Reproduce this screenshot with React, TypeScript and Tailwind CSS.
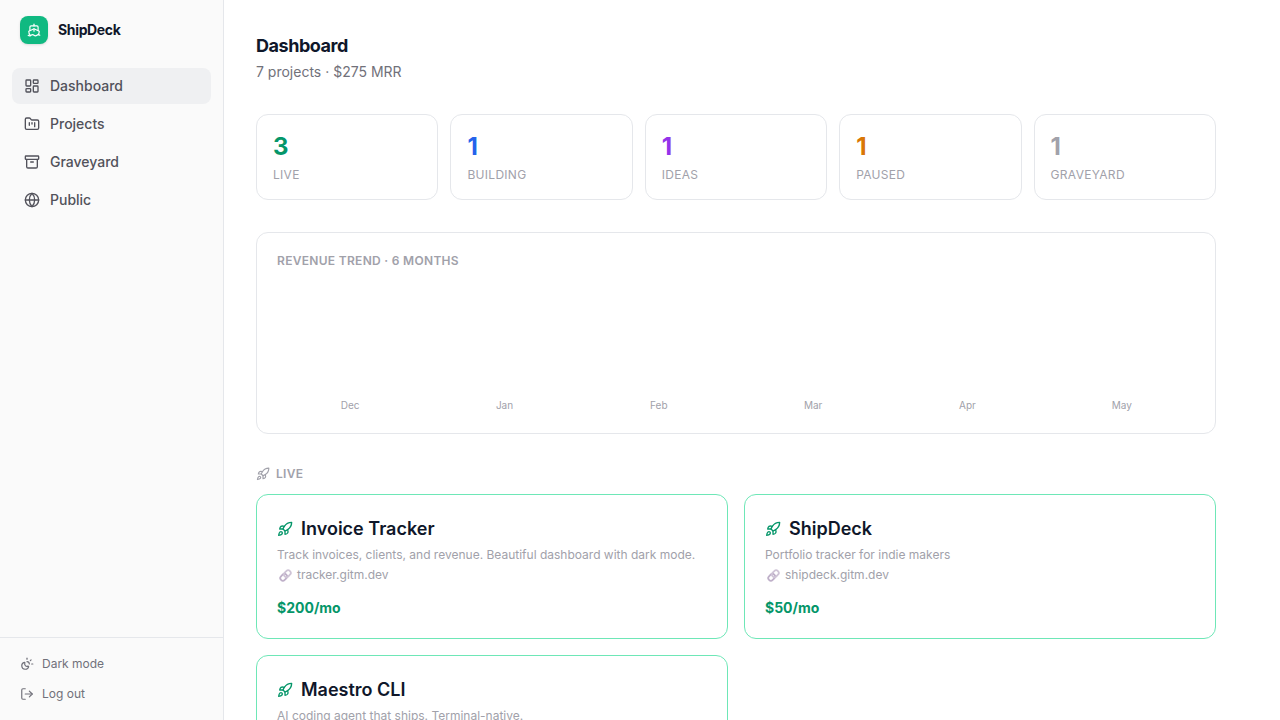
import {
    Archive,
    FolderKanban,
    Globe,
    LayoutDashboard,
    LogOut,
    Rocket,
    Ship,
    SunMoon,
} from "lucide-react";

const navItems = [
    { label: "Dashboard", icon: LayoutDashboard, active: true },
    { label: "Projects", icon: FolderKanban, active: false },
    { label: "Graveyard", icon: Archive, active: false },
    { label: "Public", icon: Globe, active: false },
];

const stats = [
    { label: "Live", value: 3, color: "text-[#059669]" },
    { label: "Building", value: 1, color: "text-[#2563eb]" },
    { label: "Ideas", value: 1, color: "text-[#9333ea]" },
    { label: "Paused", value: 1, color: "text-[#d97706]" },
    { label: "Graveyard", value: 1, color: "text-[#a1a1aa]" },
];

const months = ["Dec", "Jan", "Feb", "Mar", "Apr", "May"];

const liveProjects = [
    {
        name: "Invoice Tracker",
        description: "Track invoices, clients, and revenue. Beautiful dashboard with dark mode.",
        host: "tracker.gitm.dev",
        mrr: 200,
    },
    {
        name: "ShipDeck",
        description: "Portfolio tracker for indie makers",
        host: "shipdeck.gitm.dev",
        mrr: 50,
    },
    {
        name: "Maestro CLI",
        description: "AI coding agent that ships. Terminal-native.",
        host: "maestro.gitm.dev",
        mrr: 25,
    },
];

function ChainIcon() {
    return (
        <svg width="16" height="16" viewBox="0 0 16 16" fill="none" aria-hidden="true">
            <g transform="rotate(-45 8.5 8.5)" strokeWidth="1.8">
                <rect x="2.2" y="5.9" width="7.4" height="5.2" rx="2.6" stroke="#bfb0c9" />
                <rect x="7.4" y="5.9" width="7.4" height="5.2" rx="2.6" stroke="#cfc4d6" />
            </g>
        </svg>
    );
}

function Sidebar() {
    return (
        <aside className="flex w-56 shrink-0 flex-col border-r border-[#e5e7eb] bg-[#fafafa]">
            <div className="flex items-center gap-2.5 px-5 py-4">
                <div className="flex size-7 items-center justify-center rounded-lg bg-[#10b981] text-white shadow-sm">
                    <Ship size={14} />
                </div>
                <span className="text-sm font-bold tracking-tight text-[#0f172a]">ShipDeck</span>
            </div>

            <nav className="flex flex-1 flex-col gap-0.5 px-3 pt-2">
                {navItems.map(({ label, icon: Icon, active }) => (
                    <a
                        key={label}
                        href="#"
                        className={`flex h-9 items-center gap-2.5 rounded-lg px-3 text-sm font-medium text-[#52525b] ${active ? "bg-[#eff0f2]" : ""}`}
                    >
                        <Icon size={16} />
                        {label}
                    </a>
                ))}
            </nav>

            <div className="flex flex-col gap-0.5 border-t border-[#e5e7eb] px-3 py-3 text-xs text-[#71717a]">
                <button type="button" className="flex h-7 items-center gap-2 px-2">
                    <SunMoon size={14} />
                    Dark mode
                </button>
                <button type="button" className="flex h-7 items-center gap-2 px-2">
                    <LogOut size={14} />
                    Log out
                </button>
            </div>
        </aside>
    );
}

function ProjectCard({ project }: { project: (typeof liveProjects)[number] }) {
    return (
        <article className="rounded-xl border border-[#6ee7b7] bg-white p-5">
            <h3 className="flex items-center gap-2 text-lg font-semibold text-[#0f172a]">
                <Rocket size={16} className="text-[#059669]" />
                {project.name}
            </h3>
            <p className="mt-1 text-xs text-[#a1a1aa]">{project.description}</p>
            <a href="#" className="mt-1 flex items-center gap-1 text-xs text-[#a1a1aa]">
                <ChainIcon />
                {project.host}
            </a>
            <p className="mt-[15px] text-sm font-bold text-[#059669]">${project.mrr}/mo</p>
        </article>
    );
}

export default function App() {
    return (
        <div className="flex h-screen overflow-hidden bg-white font-['Inter',sans-serif]">
            <Sidebar />

            <main className="min-w-0 flex-1 overflow-hidden">
                <div className="max-w-5xl p-8">
                    <header className="mb-8">
                        <h1 className="text-lg font-bold tracking-tight text-[#0f172a]">Dashboard</h1>
                        <p className="mt-0.5 text-sm text-[#71717a]">7 projects · $275 MRR</p>
                    </header>

                    <div className="mb-8 grid grid-cols-5 gap-3">
                        {stats.map((stat) => (
                            <div key={stat.label} className="rounded-xl border border-[#e5e7eb] p-4">
                                <p className={`text-2xl font-bold ${stat.color}`}>{stat.value}</p>
                                <p className="mt-1 text-xs tracking-wide text-[#a1a1aa] uppercase">{stat.label}</p>
                            </div>
                        ))}
                    </div>

                    {/* Revenue chart */}
                    <section className="mb-8 rounded-xl border border-[#e5e7eb] p-5">
                        <h2 className="text-xs font-semibold tracking-wide text-[#a1a1aa] uppercase">
                            Revenue trend · 6 months
                        </h2>
                        <div className="mt-4 flex h-32 items-end gap-2">
                            {months.map((month) => (
                                <span key={month} className="flex-1 text-center text-[10px] leading-4 text-[#a1a1aa]">
                                    {month}
                                </span>
                            ))}
                        </div>
                    </section>

                    <section>
                        <h2 className="mb-3 flex items-center gap-1.5 text-xs font-semibold tracking-wide text-[#a1a1aa] uppercase">
                            <Rocket size={14} />
                            Live
                        </h2>
                        <div className="grid grid-cols-2 gap-4">
                            {liveProjects.map((project) => (
                                <ProjectCard key={project.name} project={project} />
                            ))}
                        </div>
                    </section>
                </div>
            </main>
        </div>
    );
}
